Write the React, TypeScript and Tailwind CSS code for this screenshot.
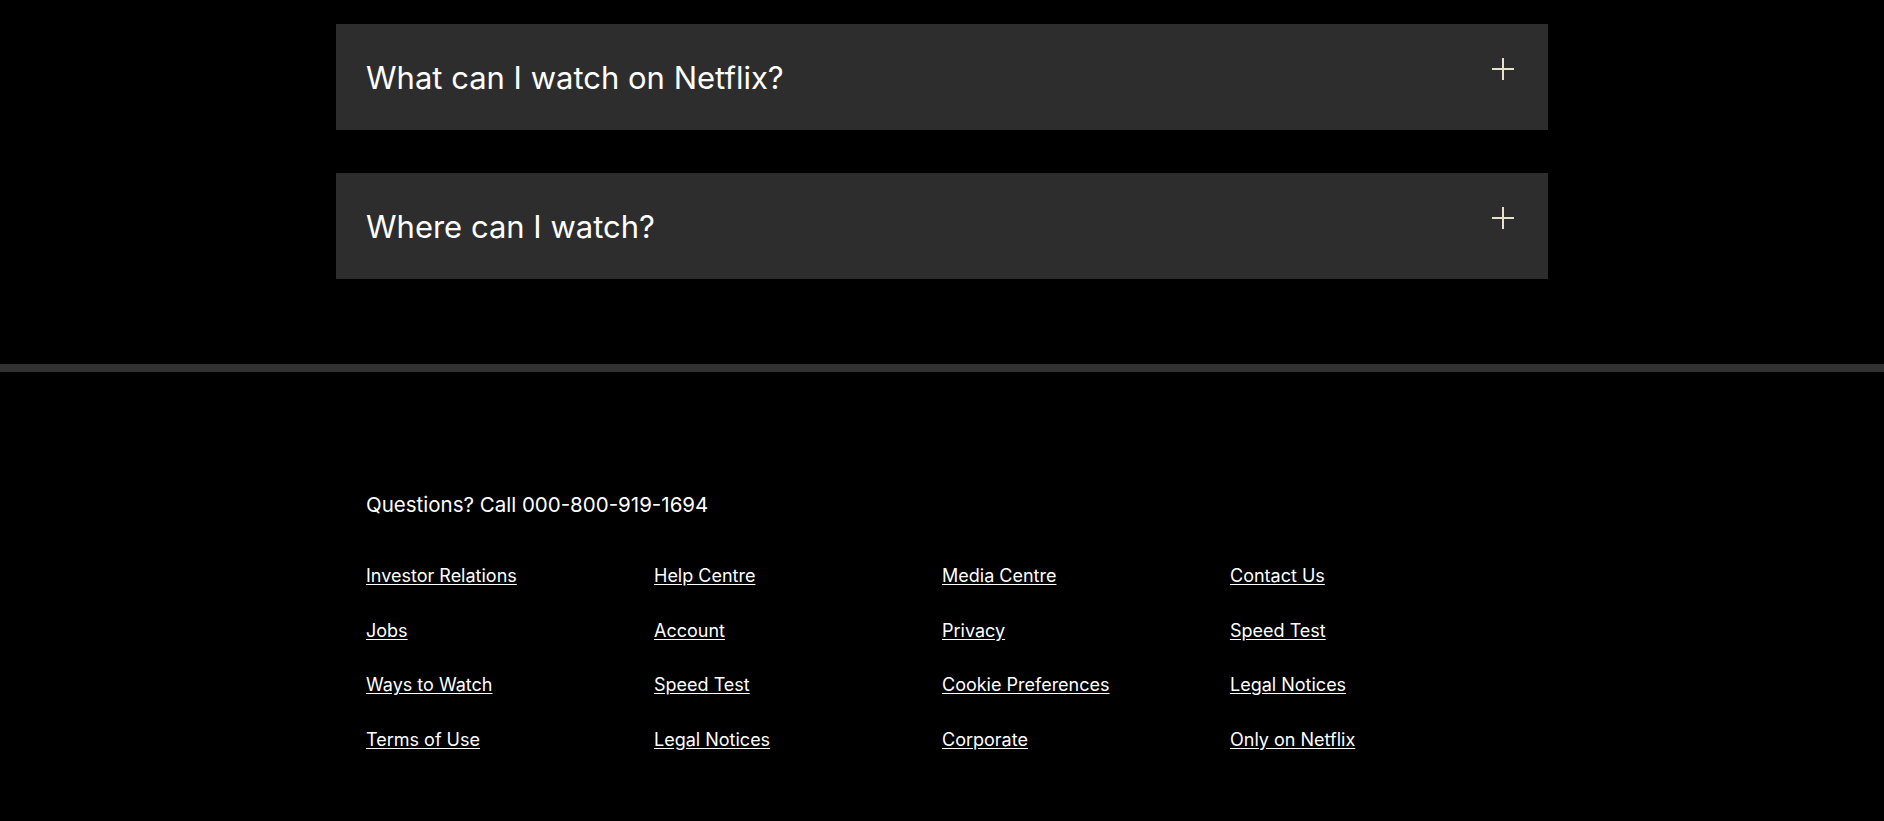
import React from 'react';

const faqs = ['What can I watch on Netflix?', 'Where can I watch?'];

const links = [
  'Investor Relations',
  'Help Centre',
  'Media Centre',
  'Contact Us',
  'Jobs',
  'Account',
  'Privacy',
  'Speed Test',
  'Ways to Watch',
  'Speed Test',
  'Cookie Preferences',
  'Legal Notices',
  'Terms of Use',
  'Legal Notices',
  'Corporate',
  'Only on Netflix',
];

function PlusIcon() {
  return (
    <svg width="22" height="22" viewBox="0 0 22 22" className="mb-4 shrink-0">
      <path d="M11 0v22M0 11h22" stroke="#e8e1cd" strokeWidth="2" />
    </svg>
  );
}

export default function App() {
  return (
    <div className="min-h-screen bg-black text-white font-['Inter',sans-serif]">
      {/* FAQ */}
      <section className="mx-auto w-[1212px] pt-6 flex flex-col gap-[43px]">
        {faqs.map((q) => (
          <button
            key={q}
            className="h-[106px] bg-[#2d2d2d] flex items-center justify-between pl-[30px] pr-[34px] text-left"
          >
            <span className="text-[31px] leading-none">{q}</span>
            <PlusIcon />
          </button>
        ))}
      </section>

      <div className="mt-[85px] h-2 bg-[#303030]" />

      {/* Footer */}
      <footer className="mx-auto w-[1212px] px-[30px] pt-[119px] pb-12">
        <p className="text-[20.5px] leading-7">Questions? Call 000-800-919-1694</p>
        <div className="mt-[43px] grid grid-cols-4 gap-y-[26.5px]">
          {links.map((l, i) => (
            <a key={i} href="#" className="text-lg leading-7 underline underline-offset-2 w-fit">
              {l}
            </a>
          ))}
        </div>
      </footer>
    </div>
  );
}
